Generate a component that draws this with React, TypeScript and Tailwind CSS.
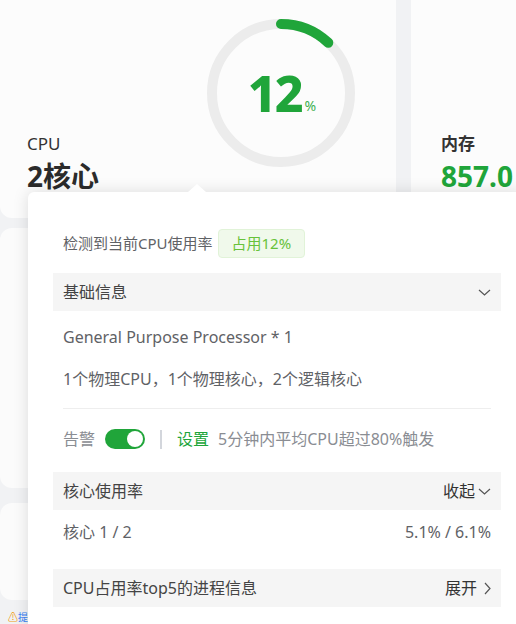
import { Fragment } from 'react';

const GREEN = '#20a53a';
const FONT = { fontFamily: '"Noto Sans", "Noto Sans CJK SC", sans-serif' };

function Ring({ percent }: { percent: number }) {
  const r = 69;
  const c = 2 * Math.PI * r;
  return (
    <div className="relative h-[148px] w-[148px]">
      <svg width="148" height="148" viewBox="0 0 148 148" className="absolute inset-0">
        <circle cx="74" cy="74" r={r} fill="none" stroke="#ececec" strokeWidth="10" />
        <circle
          cx="74"
          cy="74"
          r={r}
          fill="none"
          stroke={GREEN}
          strokeWidth="10"
          strokeLinecap="round"
          strokeDasharray={`${(c * percent) / 100} ${c}`}
          transform="rotate(-90 74 74)"
        />
      </svg>
      <div className="absolute inset-0 flex items-center justify-center pl-[2px]">
        <span className="text-[50px] font-extrabold leading-none tracking-[-2px] text-[#20a53a]">{percent}</span>
        <span className="mt-[26px] ml-[3px] text-[14px] leading-none text-[#3cb04f]">%</span>
      </div>
    </div>
  );
}

function Chevron({ dir = 'down' }: { dir?: 'down' | 'right' }) {
  if (dir === 'right') {
    return (
      <svg width="7" height="13" viewBox="0 0 7 13" fill="none">
        <polyline points="1,1 6,6.5 1,12" stroke="#555" strokeWidth="1.2" />
      </svg>
    );
  }
  return (
    <svg width="13" height="7" viewBox="0 0 13 7" fill="none">
      <polyline points="1,1 6.5,6 12,1" stroke="#555" strokeWidth="1.2" />
    </svg>
  );
}

function SectionRow({ title, action, dir }: { title: string; action?: string; dir: 'down' | 'right' }) {
  return (
    <div className="flex h-[38px] items-center justify-between bg-[#f5f5f5] px-[10px] text-[16px] text-[#444]">
      <span>{title}</span>
      <span className={`flex items-center text-[#333] ${dir === 'right' ? 'gap-[7px]' : 'gap-[3px]'}`}>
        {action}
        <Chevron dir={dir} />
      </span>
    </div>
  );
}

export default function App() {
  const info = ['General Purpose Processor * 1', '1个物理CPU，1个物理核心，2个逻辑核心'];

  return (
    <div className="relative h-[624px] w-[516px] overflow-hidden bg-[#f1f2f4]" style={FONT}>
      {/* cards behind */}
      <div className="-mt-[12px] flex gap-[15px]">
        <div className="flex h-[230px] w-[396px] shrink-0 rounded-xl bg-[#fcfcfc] pl-[27px] pt-[31px]">
          <div className="flex w-[180px] flex-col justify-end pb-[26px]">
            <span className="text-[17px] leading-[20px] text-[#333]">CPU</span>
            <span className="mt-[6px] text-[28px] font-bold leading-[32px] text-[#2b2b2b]">2核心</span>
          </div>
          <Ring percent={12} />
        </div>
        <div className="flex h-[230px] w-[300px] shrink-0 flex-col justify-end rounded-xl bg-[#fcfcfc] pb-[26px] pl-[30px]">
          <span className="text-[17px] font-bold leading-[20px] text-[#333]">内存</span>
          <span className="mt-[6px] text-[28px] font-bold leading-[32px] text-[#20a53a]">857.0</span>
        </div>
      </div>
      <div className="mt-[10px] h-[260px] w-[396px] rounded-xl bg-[#fbfbfb]" />
      <div className="mt-[15px] h-[97px] w-[396px] rounded-xl bg-[#fbfbfb]" />
      <div className="pl-[8px] pt-[12px] text-[10px] leading-none">
        <span className="text-[#f0a020]">⚠</span>
        <span className="text-[#3b82f6]">提示</span>
      </div>

      {/* popover */}
      <div className="absolute left-[28px] top-[192px] h-[460px] w-[498px] rounded-md bg-white px-[25px] pt-[37px] shadow-[0_0_16px_rgba(0,0,0,0.13)]">
        <div className="absolute -top-[8px] left-[160px] h-0 w-0 border-x-[9px] border-b-[8px] border-x-transparent border-b-white" />

        <div className="flex items-center gap-[5px] px-[10px] text-[15px] text-[#5f6266]">
          <span>检测到当前CPU使用率</span>
          <span className="flex h-[29px] items-center rounded-[4px] border border-[#e1f3d8] bg-[#f0f9eb] px-[13px] text-[15px] text-[#67c23a]">
            占用12%
          </span>
        </div>

        <div className="mt-[15px]">
          <SectionRow title="基础信息" dir="down" />
        </div>

        <div className="px-[10px] pt-[14px] text-[16px] text-[#5f6266]">
          {info.map((line, i) => (
            <Fragment key={line}>
              <div className={`h-[24px] leading-[24px] ${i > 0 ? 'mt-[18px]' : ''}`}>{line}</div>
            </Fragment>
          ))}
          <div className="mt-[17px] border-t border-[#eeeeee]" />
          <div className="mt-[20px] flex h-[20px] items-center text-[16px]">
            <span className="text-[#8a8d93]">告警</span>
            <span className="ml-[10px] flex h-[20px] w-[40px] items-center justify-end rounded-full bg-[#20a53a] pr-[2px]">
              <span className="h-[16px] w-[16px] rounded-full bg-white" />
            </span>
            <span className="ml-[15px] h-[19px] w-[2px] bg-[#d3d6dc]" />
            <span className="ml-[15px] text-[#20a53a]">设置</span>
            <span className="ml-[9px] text-[#8a8d93]">5分钟内平均CPU超过80%触发</span>
          </div>
        </div>

        <div className="mt-[23px]">
          <SectionRow title="核心使用率" action="收起" dir="down" />
        </div>
        <div className="mt-[10px] flex h-[24px] items-center justify-between px-[10px] text-[16px] text-[#5f6266]">
          <span>核心 1 / 2</span>
          <span>5.1% / 6.1%</span>
        </div>

        <div className="mt-[25px]">
          <SectionRow title="CPU占用率top5的进程信息" action="展开" dir="right" />
        </div>
      </div>
    </div>
  );
}
